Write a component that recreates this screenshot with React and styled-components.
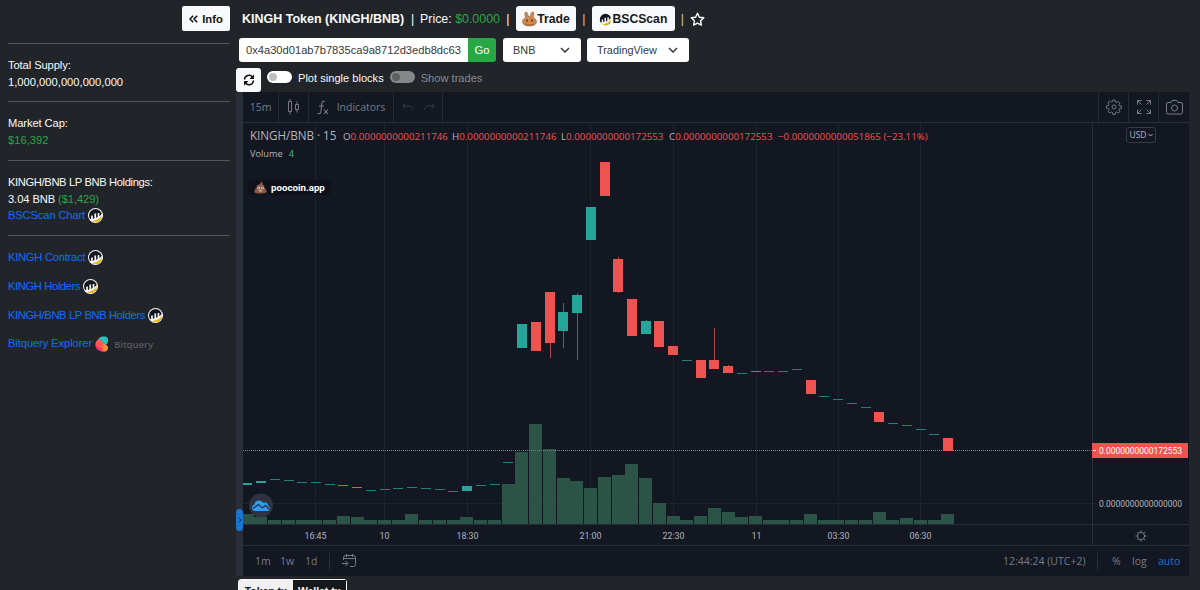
import React, { useState } from "react";
import styled, { createGlobalStyle } from "styled-components";

const GlobalStyle = createGlobalStyle`
  * {
    box-sizing: border-box;
  }
  body {
    margin: 0;
    background: #212529;
    color: #f8f9fa;
    font-family: "Liberation Sans", Arial, sans-serif;
    font-size: 11.2px;
    line-height: 16.8px;
    overflow: hidden;
  }
`;

const Page = styled.div`
  display: grid;
  grid-template-columns: 236px 1fr;
  height: 590px;
  overflow: hidden;
`;

/* ---------- sidebar ---------- */

const Sidebar = styled.aside`
  padding: 6px 6px 0 8px;
  display: flex;
  flex-direction: column;
`;

const InfoButton = styled.button`
  align-self: flex-end;
  display: flex;
  align-items: center;
  justify-content: center;
  gap: 4px;
  width: 48px;
  height: 25px;
  margin-bottom: 0.9px;
  padding: 0;
  border: none;
  border-radius: 2px;
  background: #f8f9fa;
  color: #111;
  font: bold 11.2px "Liberation Sans", Arial, sans-serif;
`;

const Divider = styled.hr`
  width: 222px;
  height: 1px;
  margin: 10.9px 0 13px;
  border: none;
  background: #54575a;
`;

const Line = styled.div`
  letter-spacing: ${(p) => p.$tight || 0}px;
`;

const Green = styled.span`
  color: #28a745;
`;

const InfoLink = styled.a`
  display: flex;
  align-items: center;
  gap: 3px;
  height: 16.8px;
  margin-bottom: ${(p) => (p.$spaced ? "12px" : "0")};
  color: #0d6efd;
  letter-spacing: ${(p) => p.$tight || 0}px;
  text-decoration: none;
`;

const BitqueryName = styled.span`
  margin: 2px 0 0 2px;
  color: #55585b;
  font: 600 9.6px "Open Sans", sans-serif;
`;

/* ---------- token header ---------- */

const Main = styled.main`
  display: flex;
  flex-direction: column;
  min-width: 0;
`;

const TitleRow = styled.div`
  display: flex;
  align-items: center;
  height: 25px;
  margin: 6px 0 0 6px;
  font-size: 12.4px;
  line-height: 17px;
  white-space: pre;
`;

const Title = styled.h1`
  width: 163px;
  margin: 0;
  padding-top: 1px;
  font-size: 12.5px;
`;

const HeaderText = styled.span`
  padding-top: 1px;
  color: ${(p) => p.$color || "#f8f9fa"};
`;

const Pipe = styled(HeaderText)`
  width: ${(p) => p.$w}px;
  text-align: center;
`;

const LinkButton = styled.a`
  display: flex;
  align-items: center;
  justify-content: center;
  width: ${(p) => p.$w}px;
  height: 25px;
  padding-top: 1px;
  border-radius: 3px;
  background: #f8f9fa;
  color: #16181b;
  font-weight: bold;
  font-size: 12.2px;
`;

const SearchRow = styled.div`
  display: flex;
  height: 24px;
  margin: 7px 0 0 3px;
`;

const Address = styled.input`
  width: 229px;
  padding: 0 0 0 7px;
  border: none;
  border-radius: 3px 0 0 3px;
  background: #fff;
  color: #343a40;
  font: 11.15px "Liberation Sans", Arial, sans-serif;
`;

const GoButton = styled.button`
  width: 28px;
  padding: 0;
  border: none;
  border-radius: 0 3px 3px 0;
  background: #28a745;
  color: #fff;
  font: 11.2px "Liberation Sans", Arial, sans-serif;
`;

const SelectBox = styled.div`
  display: flex;
  align-items: center;
  justify-content: space-between;
  width: ${(p) => p.$w}px;
  margin-left: ${(p) => p.$ml}px;
  padding: 0 11px 0 10px;
  border-radius: 3px;
  background: #fff;
  color: #343a40;
  font-size: 10.9px;
`;

const OptionsRow = styled.div`
  display: flex;
  height: 24px;
  margin-top: 6px;
`;

const RefreshButton = styled.button`
  display: flex;
  align-items: center;
  justify-content: center;
  width: 25px;
  height: 24px;
  padding: 0;
  border: none;
  border-radius: 3px;
  background: #f8f9fa;
`;

const SwitchLabel = styled.label`
  display: flex;
  align-items: flex-start;
  gap: 6px;
  height: 19px;
  margin-left: 6px;
  padding-top: 2px;
  color: ${(p) => (p.$dim ? "#868a8e" : "#f8f9fa")};
  font-size: 11.1px;
  white-space: nowrap;
`;

const Track = styled.span`
  width: 25px;
  height: 12px;
  margin-top: 1px;
  padding: 2px;
  border-radius: 6px;
  background: ${(p) => (p.$dim ? "#868788" : "#fff")};

  &::before {
    content: "";
    display: block;
    width: 8px;
    height: 8px;
    border-radius: 50%;
    background: ${(p) => (p.$dim ? "#5e6062" : "#bfbfbf")};
  }
`;

/* ---------- chart ---------- */

const ChartFrame = styled.section`
  position: relative;
  width: 953px;
  height: 484px;
  padding-left: 7px;
  background: #2a2e39;
  font-family: "Open Sans", "Noto Sans", sans-serif;
  color: #787b86;
`;

const ResizeHandle = styled.span`
  position: absolute;
  left: 0;
  top: 417px;
  width: 7px;
  height: 22px;
  border-radius: 4px;
  background: #1976d2;
  display: flex;
  align-items: center;
  justify-content: center;
`;

const ChartBody = styled.div`
  display: flex;
  flex-direction: column;
  height: 484px;
  background: #131722;
`;

const Toolbar = styled.div`
  display: flex;
  height: 31px;
  border-bottom: 1px solid #2a2e39;
  font-size: 10.5px;
`;

const Tool = styled.div`
  display: flex;
  align-items: center;
  justify-content: center;
  gap: ${(p) => p.$gap || 8}px;
  width: ${(p) => p.$w}px;
  border-right: ${(p) => (p.$last ? "none" : "1px solid #262a35")};
  border-left: ${(p) => (p.$first ? "1px solid #262a35" : "none")};
`;

const Spacer = styled.div`
  flex: 1;
`;

const Plot = styled.div`
  position: relative;
  height: 422px;
`;

const Legend = styled.div`
  position: absolute;
  left: 7px;
  top: 4px;
  display: flex;
  align-items: baseline;
  color: #b2b5be;
  font-size: 9.75px;
  line-height: 16px;
  white-space: pre;
`;

const Pair = styled.span`
  width: 93px;
  font-size: 11.7px;
  letter-spacing: -0.05px;
`;

const Quote = styled.span`
  width: ${(p) => p.$w}px;
`;

const Red = styled.span`
  color: #ef5350;
`;

const VolumeLine = styled.div`
  position: absolute;
  left: 7px;
  top: 23px;
  display: flex;
  gap: 6px;
  color: #b2b5be;
  font-size: 9.2px;
`;

const VolumeValue = styled.span`
  color: #53b987;
`;

const Watermark = styled.div`
  position: absolute;
  left: 5px;
  top: 57px;
  display: flex;
  align-items: center;
  gap: 4px;
  width: 83px;
  height: 15px;
  padding-left: 6px;
  border-radius: 4px;
  background: #0f121b;
  color: #fff;
  font: bold 9.7px Roboto, sans-serif;
`;

const Currency = styled.div`
  position: absolute;
  left: 883px;
  top: 4px;
  display: flex;
  align-items: center;
  justify-content: center;
  gap: 1px;
  width: 30px;
  height: 16px;
  border: 1px solid #363a45;
  border-radius: 3px;
  color: #b2b5be;
  font-size: 8.5px;
`;

const BottomBar = styled.div`
  display: flex;
  align-items: center;
  height: 31px;
  border-top: 1px solid #2a2e39;
  font-size: 10.5px;
  white-space: nowrap;
`;

const Range = styled.span`
  width: ${(p) => p.$w}px;
  color: ${(p) => (p.$active ? "#1976d2" : "inherit")};
`;

const Bar = styled.span`
  width: 1px;
  height: 17px;
  background: #2a2e39;
`;

const Tabs = styled.div`
  display: flex;
  width: 109px;
  height: 30px;
  margin: 3px 0 0 2px;
  border: 1px solid #f8f9fa;
  border-radius: 3px 3px 0 0;
`;

const Tab = styled.div`
  width: 54px;
  padding-top: 4px;
  background: ${(p) => (p.$active ? "#f0f0f0" : "#16181b")};
  color: ${(p) => (p.$active ? "#16181b" : "#f8f9fa")};
  font-weight: bold;
  font-size: 10.4px;
  line-height: 15px;
  text-align: center;
  white-space: nowrap;
`;

/* ---------- icons ---------- */

const BscIcon = ({ size = 15, ring = true }) => (
  <svg width={size} height={size} viewBox="0 0 30 30">
    {ring && <circle cx="15" cy="15" r="15" fill="#f8f9fa" />}
    <circle cx="15" cy="15" r="13" fill="#12161c" />
    <path d="M3 22C13 22 23 18 29 10V18C24 24 16 29 8 27Z" fill="#f8f9fa" />
    <path d="M8 26C17 25 25 20 28 14.500A13 13 0 0 1 8 26Z" fill="#f0b90b" />
    <path
      d="M8 23V15M14.500 22V11M21 19V10"
      stroke="#f8f9fa"
      strokeWidth="3.400"
    />
  </svg>
);

const BitqueryIcon = () => (
  <svg width="14" height="16" viewBox="0 0 28 32">
    <path d="M5 9C8 2 13 0 19 1c5 0 8 4 7 9 0 4-2 6-5 8L10 9Z" fill="#1fc5b7" />
    <path d="M6 8c5-1 9 3 12 7 4 4 8 5 8 9 0 6-6 8-11 7C7 30 0 24 1 16c0-4 2-7 5-8Z" fill="#ff5a4d" />
    <path d="M15 15c6 1 11 4 11 9-1 5-5 8-9 7-3-5 1-10-2-16Z" fill="#ff8a34" />
    <path d="M1 18c5 3 11 6 14 13C8 31 1 25 1 18Z" fill="#f72f77" />
  </svg>
);

const BunnyIcon = () => (
  <svg width="15" height="16" viewBox="0 0 30 32">
    <path
      d="M7 13C5 7 5 2 8 2c3 0 4 5 5 9h4c0-4 1-9 4-9 4 0 3 6 2 11 3 2 6 4 6 8 0 6-6 9-14 9S1 27 1 21c0-4 3-6 6-8Z"
      fill="#d1884f"
      stroke="#8c5a35"
      strokeWidth="1"
    />
    <path d="M2 24c4 3 22 3 26 0-2 4-6 6-13 6S4 28 2 24Z" fill="#b06f3e" />
    <ellipse cx="10" cy="19" rx="1.500" ry="2.500" fill="#4a2d1c" />
    <ellipse cx="20" cy="19" rx="1.500" ry="2.500" fill="#4a2d1c" />
  </svg>
);

const PooIcon = () => (
  <svg width="13" height="13" viewBox="0 0 28 28">
    <path
      d="M14 1c4 2 6 4 5 7 3 1 4 3 3 6 3 1 4 3 3 5 2 1 3 3 2 5-2 4-24 4-26 0-1-2 0-4 2-5-1-2 0-4 3-5-1-4 1-6 4-6 3-1 5-3 4-7Z"
      fill="#8d5a45"
    />
    <circle cx="10.500" cy="15" r="2.800" fill="#eee" />
    <circle cx="18" cy="15" r="2.800" fill="#eee" />
    <circle cx="10.500" cy="15" r="1.300" fill="#333" />
    <circle cx="18" cy="15" r="1.300" fill="#333" />
    <path d="M9 20.500q5 4 10 0Z" fill="#eee" />
  </svg>
);

const StarIcon = () => (
  <svg width="15" height="14" viewBox="0 0 30 28">
    <path
      d="M15 2.500l3.800 7.900 8.700 1.200-6.300 6 1.500 8.600-7.700-4.100-7.700 4.100 1.500-8.600-6.300-6 8.700-1.200Z"
      fill="none"
      stroke="#fff"
      strokeWidth="2.800"
      strokeLinejoin="round"
    />
  </svg>
);

const DoubleLeft = () => (
  <svg width="9" height="8" viewBox="0 0 9 8" fill="none" stroke="#111" strokeWidth="1.500">
    <path d="M4.200 .7L1 4l3.200 3.300M8.200 .7L5 4l3.200 3.300" />
  </svg>
);

const RefreshIcon = () => (
  <svg width="12" height="12" viewBox="0 0 24 24" fill="none" stroke="#111" strokeWidth="3">
    <path d="M3 11a9 9 0 0 1 16-5M21 13a9 9 0 0 1-16 5" />
    <path d="M22 1v9h-9ZM2 23v-9h9Z" fill="#111" stroke="none" />
  </svg>
);

const Chevron = () => (
  <svg width="10" height="6" viewBox="0 0 10 6" fill="none" stroke="#343a40" strokeWidth="1.500">
    <path d="M1 1l4 4 4-4" />
  </svg>
);

const CandlesIcon = () => (
  <svg width="13" height="16" viewBox="0 0 13 16" fill="none" stroke="#787b86">
    <path d="M1.500 2.500h3v10h-3ZM3 0v2.500M3 12.500v3M8.500 5.500h3v5h-3ZM10 2.500v3M10 10.500v3" />
  </svg>
);

const FxIcon = () => (
  <svg width="12" height="15" viewBox="0 0 12 15" fill="none" stroke="#787b86" strokeWidth="1.100">
    <path d="M8 1.500C6 .3 5 1.500 4.700 4L4 11c-.3 2.500-1.500 3.300-3.500 2.300M2 6h5M7 9.500l4 4.500M11 9.500L7 14" />
  </svg>
);

const ArrowIcon = ({ flip }) => (
  <svg width="11" height="8" viewBox="0 0 11 8" fill="none" stroke="#363a45">
    <g transform={flip ? "translate(11 0) scale(-1 1)" : undefined}>
      <path d="M3.500 .5L.7 3l2.800 2.500M1 3h5.500c2.500 0 4 1.500 4 4" />
    </g>
  </svg>
);

// gear outline with eight rounded teeth
const GearIcon = () => (
  <svg width="16" height="16" viewBox="0 0 28 28" fill="none" stroke="#787b86" strokeWidth="1.700">
    <path
      strokeLinejoin="round"
      d="M12 2h4l.7 3.500 2 .8 3-2 2.800 2.900-2 2.900.8 2L27 12.200v3.900l-3.500.7-.8 2 2 3-2.900 2.800-3-2-2 .8L16 27h-4l-.7-3.600-2-.8-3 2-2.800-2.900 2-2.900-.8-2L1 16v-4l3.500-.7.8-2-2-3 2.900-2.800 3 2 2-.8Z"
    />
    <circle cx="14" cy="14" r="3.500" />
  </svg>
);

const FullscreenIcon = () => (
  <svg width="14" height="14" viewBox="0 0 14 14" fill="none" stroke="#787b86">
    <path d="M.5 4.500v-4h4M.5 .5l4 4M9.500 .5h4v4M13.500 .5l-4 4M.5 9.500v4h4M.5 13.500l4-4M13.500 9.500v4h-4M13.500 13.500l-4-4" />
  </svg>
);

const CameraIcon = () => (
  <svg width="17" height="15" viewBox="0 0 17 15" fill="none" stroke="#787b86">
    <path d="M2 2.500h3l1-2h5l1 2h3q1.500 0 1.500 1.500v8.500q0 1.500-1.500 1.500H2Q.5 14 .5 12.500V4Q.5 2.500 2 2.500Z" />
    <circle cx="8.500" cy="8" r="3" />
  </svg>
);

const CalendarIcon = () => (
  <svg width="14" height="14" viewBox="0 0 14 14" fill="none" stroke="#787b86">
    <path d="M1.500 6V3.500q0-2 2-2h8q2 0 2 2v7q0 2-2 2H8M1.500 4.500h12M4.500 0v3M10.500 0v3M0 9.500h5.500M3.500 7l2.500 2.500L3.500 12" />
  </svg>
);

/* ---------- chart data ---------- */

const UP = "#26a69a";
const DOWN = "#ef5350";
const STEP = 13.74;

// [kind, body top, body bottom, wick top, wick bottom], plot pixels
// u = up, d = down, f = flat up, r = flat down
const candles = [
  ["u", 360, 362], ["u", 358, 360], ["f", 356], ["f", 357], ["f", 359],
  ["f", 359], ["f", 361], ["d", 362, 363], ["d", 364, 365], ["f", 367],
  ["f", 366], ["f", 365], ["f", 364], ["f", 365], ["f", 366],
  ["f", 368], ["u", 363, 368], ["f", 362], ["f", 361], ["f", 339],
  ["u", 201, 225], ["d", 199, 228], ["d", 169, 220, 169, 235],
  ["u", 189, 208, 180, 225], ["u", 172, 190, 170, 237], ["u", 84, 117],
  ["d", 39, 73], ["d", 136, 169, 134, 170], ["d", 176, 213],
  ["u", 198, 211, 197, 211], ["d", 198, 224], ["d", 223, 232],
  ["f", 237], ["d", 237, 255], ["d", 237, 246, 205, 246],
  ["d", 243, 250, 242, 250], ["f", 250], ["u", 248, 249], ["f", 248],
  ["f", 248], ["f", 246], ["d", 257, 271], ["f", 273], ["f", 276],
  ["f", 280], ["f", 284], ["d", 289, 299], ["f", 300], ["r", 302],
  ["f", 306], ["f", 311], ["d", 315, 328],
];

const volumes = [
  9, 6, 3, 3, 3, 3, 3, 7, 6, 3, 3, 3, 9, 3, 3, 3, 6, 3, 3, 39, 71, 99, 74,
  45, 42, 35, 46, 48, 59, 45, 20, 7, 3, 7, 15, 11, 6, 7, 3, 3, 3, 9, 3, 3, 3,
  3, 11, 3, 5, 3, 3, 9,
];

const ticks = [
  ["16:45", 72], ["10", 141], ["18:30", 224], ["21:00", 347],
  ["22:30", 430], ["11", 513], ["03:30", 595], ["06:30", 677],
];

const Graph = styled.svg`
  display: block;
  overflow: visible;
  font: 9.8px Roboto, "Open Sans", sans-serif;
`;

const PriceChart = () => (
  <Graph width="946" height="422">
    <clipPath id="plot-area">
      <rect x="0" y="0" width="946" height="422" />
    </clipPath>
    {ticks.map(([label, x]) => (
      <g key={label}>
        <rect x={x} y="0" width="1" height="404" fill="#1e222d" />
        <text
          x={x + 0.5}
          y="416"
          fill="#b2b5be"
          textAnchor="middle"
          textLength={label.length > 2 ? 22 : 10}
          lengthAdjust="spacingAndGlyphs"
        >
          {label}
        </text>
      </g>
    ))}
    <rect x="0" y="380" width="853" height="1" fill="#1e222d" />
    <g shapeRendering="crispEdges" clipPath="url(#plot-area)">
      {volumes.map((h, i) => (
        <rect
          key={i}
          x={Math.round(STEP * i - 2.4)}
          y={400 - h}
          width="13"
          height={h + 1}
          fill="#2b5447"
        />
      ))}
      {candles.map(([kind, top, bottom, wickTop, wickBottom], i) => {
        const mid = Math.round(4.28 + STEP * i);
        if (kind === "f" || kind === "r") {
          return (
            <rect
              key={i}
              x={mid - 5}
              y={top}
              width="10"
              height="1"
              fill={kind === "f" ? "#208178" : "#b04547"}
            />
          );
        }
        return (
          <g key={i} fill={kind === "u" ? UP : DOWN}>
            {wickTop !== undefined && (
              <rect x={mid} y={wickTop} width="1" height={wickBottom - wickTop} opacity="0.75" />
            )}
            <rect x={mid - 5} y={top} width="10" height={bottom - top} />
          </g>
        );
      })}
      <path d="M0 327.500H849" stroke="#ef5350" strokeDasharray="1 1" />
      <rect x="849" y="0" width="1" height="422" fill="#2a2e39" />
      <rect x="0" y="401" width="946" height="1" fill="#2a2e39" />
      <rect x="849" y="320" width="96" height="15" fill={DOWN} />
      <rect x="850" y="327" width="3" height="1" fill="#fff" />
    </g>
    <text x="856" y="331" fill="#fff" textLength="83" lengthAdjust="spacingAndGlyphs">
      0.0000000000172553
    </text>
    <text x="856" y="384" fill="#b2b5be" textLength="83" lengthAdjust="spacingAndGlyphs">
      0.0000000000000000
    </text>
    <g transform="translate(898 413)" fill="none" stroke="#787b86">
      <circle r="3.600" />
      <path d="M0-3.600v-2M0 3.600v2M-3.600 0h-2M3.600 0h2M-2.600-2.600l-1.400-1.400M2.600-2.600l1.400-1.400M-2.600 2.600l-1.400 1.400M2.600 2.600l1.400 1.400" />
    </g>
    {/* cloud badge */}
    <circle cx="18" cy="382.500" r="12" fill="#2f3241" />
    <path
      d="M12.500 388Q9 388 9 384.800 9 382 11.500 381.500 12 377.500 16 377.500 19 377.500 20.500 380 22 379 23.800 380 25.300 381 25.200 383 27.500 383.500 27 386 26.500 388 24.500 388Z"
      fill="#2f9df4"
    />
    <path d="M10 385.500l5.500-4 4 3.500 3-2.500 4 4" fill="none" stroke="#2f3241" strokeWidth="1.300" />
  </Graph>
);

const quotes = [
  ["O", "0.0000000000211746", 109],
  ["H", "0.0000000000211746", 109],
  ["L", "0.0000000000172553", 108],
  ["C", "0.0000000000172553", 109],
];

const App = () => {
  const [address, setAddress] = useState("0x4a30d01ab7b7835ca9a8712d3edb8dc63");

  return (
    <>
      <GlobalStyle />
      <Page>
        <Sidebar>
          <InfoButton>
            <DoubleLeft />
            Info
          </InfoButton>
          <Divider />
          <Line $tight={-0.1}>Total Supply:</Line>
          <Line>1,000,000,000,000,000</Line>
          <Divider />
          <Line $tight={-0.1}>Market Cap:</Line>
          <Green>$16,392</Green>
          <Divider />
          <Line $tight={-0.37}>KINGH/BNB LP BNB Holdings:</Line>
          <Line $tight={-0.1}>
            3.04 BNB <Green>($1,429)</Green>
          </Line>
          <InfoLink $tight={-0.15}>
            BSCScan Chart <BscIcon />
          </InfoLink>
          <Divider />
          <InfoLink $spaced $tight={-0.27}>
            KINGH Contract <BscIcon />
          </InfoLink>
          <InfoLink $spaced $tight={-0.37}>
            KINGH Holders <BscIcon />
          </InfoLink>
          <InfoLink $spaced $tight={-0.37}>
            KINGH/BNB LP BNB Holders <BscIcon />
          </InfoLink>
          <InfoLink $spaced $tight={-0.1}>
            Bitquery Explorer <BitqueryIcon />
            <BitqueryName>Bitquery</BitqueryName>
          </InfoLink>
        </Sidebar>

        <Main>
          <TitleRow>
            <Title>KINGH Token (KINGH/BNB)</Title>
            <Pipe $w={15}>|</Pipe>
            <HeaderText>Price: </HeaderText>
            <HeaderText $color="#28a745">$0.0000</HeaderText>
            <Pipe $w={16}>|</Pipe>
            <LinkButton $w={60}>
              <BunnyIcon />
              Trade
            </LinkButton>
            <Pipe $w={16} $color="#d9c29a">|</Pipe>
            <LinkButton $w={83}>
              <BscIcon size={13} ring={false} />
              BSCScan
            </LinkButton>
            <Pipe $w={15} $color="#d9c29a">|</Pipe>
            <StarIcon />
          </TitleRow>

          <SearchRow>
            <Address value={address} onChange={(e) => setAddress(e.target.value)} />
            <GoButton>Go</GoButton>
            <SelectBox $w={78} $ml={7}>
              BNB <Chevron />
            </SelectBox>
            <SelectBox $w={102} $ml={6}>
              TradingView <Chevron />
            </SelectBox>
          </SearchRow>

          <OptionsRow>
            <RefreshButton>
              <RefreshIcon />
            </RefreshButton>
            <SwitchLabel>
              <Track />
              Plot single blocks
            </SwitchLabel>
            <SwitchLabel $dim>
              <Track $dim />
              Show trades
            </SwitchLabel>
          </OptionsRow>

          <ChartFrame>
            <ResizeHandle>
              <svg width="4" height="6" viewBox="0 0 4 6" fill="none" stroke="#0c2b4d">
                <path d="M.7 .7L3 3 .7 5.300" />
              </svg>
            </ResizeHandle>
            <ChartBody>
              <Toolbar>
                <Tool $w={36}>15m</Tool>
                <Tool $w={30}><CandlesIcon /></Tool>
                <Tool $w={85}><FxIcon />Indicators</Tool>
                <Tool $w={49} $gap={11}>
                  <ArrowIcon />
                  <ArrowIcon flip />
                </Tool>
                <Spacer />
                <Tool $w={31} $first><GearIcon /></Tool>
                <Tool $w={30}><FullscreenIcon /></Tool>
                <Tool $w={30} $last><CameraIcon /></Tool>
              </Toolbar>
              <Plot>
                <PriceChart />
                <Legend>
                  <Pair>KINGH/BNB · 15</Pair>
                  {quotes.map(([name, value, w]) => (
                    <Quote key={name} $w={w}>
                      {name}
                      <Red>{value}</Red>
                    </Quote>
                  ))}
                  <Red>−0.0000000000051865 (−23.11%)</Red>
                </Legend>
                <VolumeLine>
                  Volume <VolumeValue>4</VolumeValue>
                </VolumeLine>
                <Watermark>
                  <PooIcon />
                  poocoin.app
                </Watermark>
                <Currency>
                  USD
                  <svg width="5" height="4" viewBox="0 0 5 4" fill="none" stroke="#b2b5be">
                    <path d="M.5 1l2 2 2-2" />
                  </svg>
                </Currency>
              </Plot>
              <BottomBar>
                <Range $w={12} />
                <Range $w={25}>1m</Range>
                <Range $w={25}>1w</Range>
                <Range $w={24}>1d</Range>
                <Bar />
                <Range $w={12} />
                <CalendarIcon />
                <Spacer />
                <Range $w={94}>12:44:24 (UTC+2)</Range>
                <Bar />
                <Range $w={14} />
                <Range $w={20}>%</Range>
                <Range $w={26}>log</Range>
                <Range $w={31} $active>auto</Range>
              </BottomBar>
            </ChartBody>
          </ChartFrame>

          <Tabs>
            <Tab $active>Token tx</Tab>
            <Tab>Wallet tx</Tab>
          </Tabs>
        </Main>
      </Page>
    </>
  );
};

export default App;
